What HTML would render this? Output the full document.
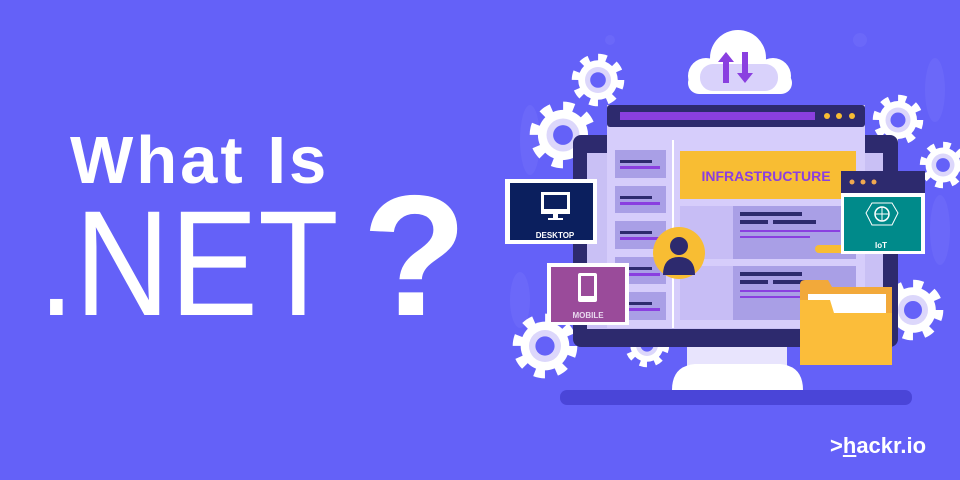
<!DOCTYPE html>
<html><head><meta charset="utf-8"><style>
html,body{margin:0;padding:0}
body{width:960px;height:480px;overflow:hidden;background:#6461f8;position:relative;font-family:"Liberation Sans",sans-serif}
.t{position:absolute;color:#fff;white-space:nowrap}
</style></head><body>
<svg width="960" height="480" style="position:absolute;left:0;top:0">
<defs>
<g id="gear">
<circle r="8.6" fill="none" stroke="#fff" stroke-width="3" stroke-dasharray="3.2 3.55"/>
<circle r="7.6" fill="#fff"/>
<circle r="5" fill="#dcd7fb"/>
<circle r="3" fill="#6461f8"/>
</g>
</defs>
<g fill="#6b68f9">
<ellipse cx="530" cy="140" rx="10" ry="35"/><ellipse cx="935" cy="90" rx="10" ry="32"/>
<ellipse cx="940" cy="230" rx="10" ry="35"/><ellipse cx="520" cy="300" rx="10" ry="28"/>
<circle cx="860" cy="40" r="7"/><circle cx="610" cy="40" r="5"/>
</g>
<use href="#gear" transform="translate(598,80) scale(2.6)"/>
<use href="#gear" transform="translate(563,135) scale(3.3)"/>
<use href="#gear" transform="translate(545,346) scale(3.2)"/>
<use href="#gear" transform="translate(898,120) scale(2.5)"/>
<use href="#gear" transform="translate(943,165) scale(2.3)"/>
<use href="#gear" transform="translate(913,310) scale(3)"/>
<use href="#gear" transform="translate(647,345) scale(2.2)"/>
<g>
<circle cx="738" cy="58" r="28" fill="#fff"/>
<circle cx="706" cy="76" r="18" fill="#fff"/>
<circle cx="773" cy="76" r="18" fill="#fff"/>
<rect x="688" y="72" width="104" height="22" rx="11" fill="#fff"/>
<rect x="700" y="64" width="78" height="27" rx="13" fill="#d9d2fb"/>
<path d="M726 52 L734 62 L729 62 L729 83 L723 83 L723 62 L718 62 Z" fill="#8a3fe0"/>
<path d="M745 83 L753 73 L748 73 L748 52 L742 52 L742 73 L737 73 Z" fill="#8a3fe0"/>
</g>
<rect x="560" y="390" width="352" height="15" rx="7" fill="#4a45d8"/>
<rect x="687" y="344" width="100" height="22" fill="#e8e4fd"/>
<path d="M672 390 Q672 366 695 364 L780 364 Q803 366 803 390 Z" fill="#fff"/>
<rect x="573" y="135" width="325" height="212" rx="8" fill="#2d2a6e"/>
<rect x="587" y="153" width="296" height="176" fill="#c9c0f5"/>
<rect x="607" y="105" width="258" height="223" fill="#d6cdfb"/>
<rect x="607" y="105" width="258" height="22" rx="3" fill="#2d2a6e"/>
<rect x="620" y="112" width="195" height="8" fill="#8a3fe0"/>
<circle cx="827" cy="116" r="3" fill="#f8bd33"/><circle cx="839" cy="116" r="3" fill="#f8bd33"/><circle cx="852" cy="116" r="3" fill="#f8bd33"/>
<rect x="672" y="140" width="2" height="188" fill="#fff"/>
<g fill="#a99fe6">
<rect x="615" y="150" width="51" height="28"/><rect x="615" y="186" width="51" height="27"/>
<rect x="615" y="221" width="51" height="28"/><rect x="615" y="257" width="51" height="27"/>
<rect x="615" y="292" width="51" height="28"/>
</g>
<g fill="#2d2a6e"><rect x="620" y="160" width="32" height="3"/><rect x="620" y="196" width="32" height="3"/><rect x="620" y="231" width="32" height="3"/><rect x="620" y="267" width="32" height="3"/><rect x="620" y="302" width="32" height="3"/></g>
<g fill="#8a3fe0"><rect x="620" y="166" width="40" height="3"/><rect x="620" y="202" width="40" height="3"/><rect x="620" y="237" width="40" height="3"/><rect x="620" y="273" width="40" height="3"/><rect x="620" y="308" width="40" height="3"/></g>
<rect x="680" y="151" width="176" height="48" fill="#f8bd33"/>
<rect x="680" y="206" width="176" height="53" fill="#c7bdf5"/>
<rect x="733" y="206" width="123" height="53" fill="#a99fe6"/>
<rect x="680" y="266" width="176" height="54" fill="#c7bdf5"/>
<rect x="733" y="266" width="123" height="54" fill="#a99fe6"/>
<g fill="#2d2a6e"><rect x="740" y="212" width="62" height="4"/><rect x="740" y="220" width="28" height="4"/><rect x="773" y="220" width="43" height="4"/>
<rect x="740" y="272" width="62" height="4"/><rect x="740" y="280" width="28" height="4"/><rect x="773" y="280" width="43" height="4"/></g>
<g fill="#8a3fe0"><rect x="740" y="230" width="100" height="2"/><rect x="740" y="236" width="70" height="2"/><rect x="740" y="290" width="100" height="2"/><rect x="740" y="296" width="70" height="2"/></g>
<rect x="815" y="245" width="30" height="8" rx="4" fill="#f8bd33"/>
<text x="766" y="181" text-anchor="middle" font-family="Liberation Sans" font-weight="bold" font-size="14" fill="#8a3fe0">INFRASTRUCTURE</text>
<circle cx="679" cy="253" r="26" fill="#f8bd33"/>
<circle cx="679" cy="246" r="9" fill="#2d2a6e"/>
<path d="M663 275 Q663 257 679 257 Q695 257 695 275 Z" fill="#2d2a6e"/>
<rect x="505" y="179" width="92" height="65" fill="#fff"/>
<rect x="510" y="183" width="83" height="57" fill="#0b1f5e"/>
<rect x="541" y="192" width="29" height="22" fill="#fff"/><rect x="544" y="195" width="23" height="14" fill="#0b1f5e"/>
<rect x="553" y="214" width="5" height="4" fill="#fff"/><rect x="548" y="218" width="15" height="2" fill="#fff"/>
<text x="555" y="238" text-anchor="middle" font-family="Liberation Sans" font-weight="bold" font-size="8" fill="#fff">DESKTOP</text>
<rect x="547" y="263" width="82" height="62" fill="#fff"/>
<rect x="551" y="267" width="74" height="55" fill="#9a4b9a"/>
<rect x="578" y="273" width="19" height="29" rx="2" fill="#fff"/><rect x="581" y="276" width="13" height="20" fill="#9a4b9a"/>
<text x="588" y="318" text-anchor="middle" font-family="Liberation Sans" font-weight="bold" font-size="8" fill="#e8d8ee">MOBILE</text>
<rect x="841" y="171" width="84" height="83" fill="#fff"/>
<rect x="841" y="171" width="84" height="22" fill="#2d2a6e"/>
<circle cx="852" cy="182" r="2.5" fill="#f0a850"/><circle cx="863" cy="182" r="2.5" fill="#f0a850"/><circle cx="874" cy="182" r="2.5" fill="#f0a850"/>
<rect x="844" y="197" width="77" height="54" fill="#008a8a"/>
<circle cx="882" cy="214" r="7" fill="none" stroke="#fff" stroke-width="1.5"/>
<path d="M875 214 H889 M882 207 V221" stroke="#fff" stroke-width="1"/>
<path d="M872 203 H892 L898 213 L892 225 H872 L866 213 Z" fill="none" stroke="#fff" stroke-width="1"/>
<text x="881" y="248" text-anchor="middle" font-family="Liberation Sans" font-weight="bold" font-size="8" fill="#fff">IoT</text>
<path d="M800 285 Q800 280 805 280 L828 280 L832 287 L892 287 L892 365 L800 365 Z" fill="#f2a93a"/>
<rect x="808" y="294" width="78" height="22" fill="#fff"/>
<path d="M800 300 L830 300 L834 313 L892 313 L892 365 L800 365 Z" fill="#fbbd3a"/>
</svg>
<div class="t" style="left:70px;top:122px;font-size:67px;font-weight:bold;letter-spacing:3px">What Is</div>
<div class="t" style="left:38px;top:188px;font-size:150px;line-height:150px;transform-origin:0 0;transform:scaleX(0.88)">.NET</div>
<div class="t" style="left:362px;top:170px;font-size:172px;line-height:172px;font-weight:bold">?</div>
<div class="t" style="left:830px;top:433px;font-size:22px;font-weight:bold">&gt;<span style="text-decoration:underline">h</span>ackr.io</div>
</body></html>
